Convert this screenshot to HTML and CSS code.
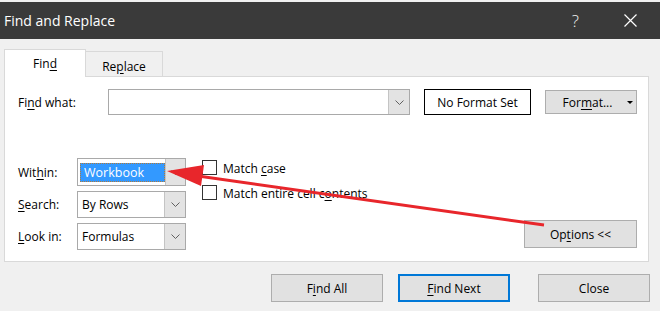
FILE: index.html
```html
<!DOCTYPE html>
<html>
<head>
<meta charset="utf-8">
<link rel="stylesheet" href="styles.css">
</head>
<body>
<div class="win">
  <div class="titlebar">
    <span class="title">Find and Replace</span>
    <span class="help">?</span>
    <svg class="close" width="13" height="13" viewBox="0 0 13 13"><path d="M0.5 0.5 L12.5 12.5 M12.5 0.5 L0.5 12.5" stroke="#ffffff" stroke-width="1.2" fill="none"/></svg>
  </div>
  <div class="tabs">
    <div class="tab active">Fin<u>d</u></div>
    <div class="tab">Re<u>p</u>lace</div>
  </div>
  <div class="panel">
    <div class="row1">
      <span class="lbl findlbl">Fi<u>n</u>d what:</span>
      <div class="combo findcombo"><div class="field"></div><div class="dd"><svg width="9" height="5" viewBox="0 0 9 5"><path d="M0.5 0.5 L4.5 4.5 L8.5 0.5" stroke="#606060" fill="none"/></svg></div></div>
      <div class="nofmt">No Format Set</div>
      <div class="btn fmt">For<u>m</u>at...<span class="caret"></span></div>
    </div>
    <div class="lower">
      <div class="opts">
        <div class="optrow r1"><span class="lbl optlbl">Wit<u>h</u>in:</span><div class="combo sel"><div class="field"><span class="hl">Workbook</span></div><div class="dd"><svg width="9" height="5" viewBox="0 0 9 5"><path d="M0.5 0.5 L4.5 4.5 L8.5 0.5" stroke="#606060" fill="none"/></svg></div></div></div>
        <div class="optrow"><span class="lbl optlbl"><u>S</u>earch:</span><div class="combo sel"><div class="field"><span class="val">By Rows</span></div><div class="dd"><svg width="9" height="5" viewBox="0 0 9 5"><path d="M0.5 0.5 L4.5 4.5 L8.5 0.5" stroke="#606060" fill="none"/></svg></div></div></div>
        <div class="optrow"><span class="lbl optlbl"><u>L</u>ook in:</span><div class="combo sel"><div class="field"><span class="val">Formulas</span></div><div class="dd"><svg width="9" height="5" viewBox="0 0 9 5"><path d="M0.5 0.5 L4.5 4.5 L8.5 0.5" stroke="#606060" fill="none"/></svg></div></div></div>
      </div>
      <div class="checks">
        <div class="chk"><span class="box"></span><span class="ctext">Match <u>c</u>ase</span></div>
        <div class="chk"><span class="box"></span><span class="ctext">Match entire cell c<u>o</u>ntents</span></div>
      </div>
      <div class="spacer"></div>
      <div class="btn options">Op<u>t</u>ions &lt;&lt;</div>
    </div>
  </div>
  <div class="actions">
    <div class="btn act findall">F<u>i</u>nd All</div>
    <div class="btn act findnext"><u>F</u>ind Next</div>
    <div class="btn act closebtn">Close</div>
  </div>
  <svg class="arrow" width="660" height="311" viewBox="0 0 660 311">
    <line x1="544" y1="223" x2="198" y2="174" stroke="#e8262b" stroke-width="3"/>
    <polygon points="167,169 204,163 201,184" fill="#e8262b"/>
  </svg>
</div>
</body>
</html>
```

FILE: styles.css
```css
* { box-sizing: border-box; }
html, body { margin: 0; padding: 0; }
body {
  width: 660px;
  height: 311px;
  overflow: hidden;
  background: #f0f0f0;
  font-family: "Open Sans", "Noto Sans", sans-serif;
  font-size: 12px;
  color: #000;
}
u { text-decoration: underline; text-underline-offset: 2px; }
.win { position: relative; width: 660px; height: 311px; }
.titlebar {
  margin-top: 2px;
  height: 37px;
  background: #3a3a3a;
  display: flex;
  align-items: center;
  color: #fff;
}
.title { font-size: 14px; padding-left: 4px; flex: 1; }
.help { font-size: 17px; font-weight: 300; margin-right: 45px; color: #f0f0f0; }
.close { margin-right: 23px; }
.tabs {
  margin-top: 10px;
  margin-left: 4px;
  display: flex;
  align-items: flex-end;
  height: 27px;
}
.tab {
  height: 25px;
  width: 77px;
  border: 1px solid #d9d9d9;
  border-left: none;
  border-bottom: none;
  background: #f0f0f0;
  text-align: center;
  line-height: 25px;
  padding-top: 2px;
  font-size: 12px;
}
.tab.active {
  width: 82px;
  height: 28px;
  border-left: 1px solid #d9d9d9;
  background: #fff;
  margin-bottom: -1px;
  position: relative;
  z-index: 1;
  line-height: 28px;
  padding-top: 0;
}
.panel {
  margin-left: 4px;
  width: 645px;
  height: 186px;
  border: 1px solid #d9d9d9;
  background: #fff;
  padding: 12px 0 0 13px;
}
.row1 { display: flex; align-items: center; height: 26px; }
.lbl { white-space: nowrap; }
.findlbl { width: 90px; }
.combo {
  display: flex;
  border: 1px solid #a9a9a9;
  background: #fff;
}
.findcombo { width: 302px; height: 26px; }
.combo .field { flex: 1; display: flex; align-items: center; }
.combo .dd {
  width: 21px;
  background: #e3e3e3;
  border-left: 1px solid #c4c4c4;
  display: flex;
  align-items: center;
  justify-content: center;
}
.nofmt {
  margin-left: 14px;
  width: 107px;
  height: 26px;
  border: 1px solid #000;
  display: flex;
  align-items: center;
  justify-content: center;
}
.btn {
  background: #e1e1e1;
  border: 1px solid #adadad;
  display: flex;
  align-items: center;
  justify-content: center;
  padding-top: 1px;
}
.fmt {
  margin-left: 14px;
  width: 92px;
  height: 24px;
  padding-left: 14px;
}
.caret {
  margin-left: 15px;
  width: 0;
  height: 0;
  border-left: 3px solid transparent;
  border-right: 3px solid transparent;
  border-top: 3px solid #000;
}
.lower { display: flex; margin-top: 43px; }
.opts { display: flex; flex-direction: column; gap: 5px; }
.optrow { display: flex; align-items: center; height: 27px; }
.optrow.r1 { height: 28px; }
.optlbl { width: 59px; }
.sel { width: 109px; height: 100%; }
.val { padding-left: 4px; }
.hl {
  margin-left: 2px;
  width: 85px;
  height: 19px;
  background: #3399ff;
  color: #fff;
  padding-left: 3px;
  line-height: 18px;
  border: 1px dotted #b07a3a;
  font-size: 12.5px;
}
.checks {
  margin-left: 16px;
  padding-top: 2px;
  display: flex;
  flex-direction: column;
  gap: 10px;
}
.chk { display: flex; align-items: center; height: 15px; }
.ctext { position: relative; top: 1px; }
.box {
  width: 15px;
  height: 15px;
  border: 1px solid #333;
  background: #fff;
  margin-right: 6px;
}
.spacer { flex: 1; }
.options {
  align-self: flex-end;
  width: 113px;
  height: 28px;
  margin-right: 11px;
  margin-bottom: 2px;
}
.actions { display: flex; margin-top: 12px; }
.act { width: 112px; height: 28px; }
.findall { margin-left: 271px; }
.findnext { margin-left: 15px; border: 2px solid #0078d7; }
.closebtn { margin-left: 28px; }
.arrow { position: absolute; left: 0; top: 0; pointer-events: none; }
```
